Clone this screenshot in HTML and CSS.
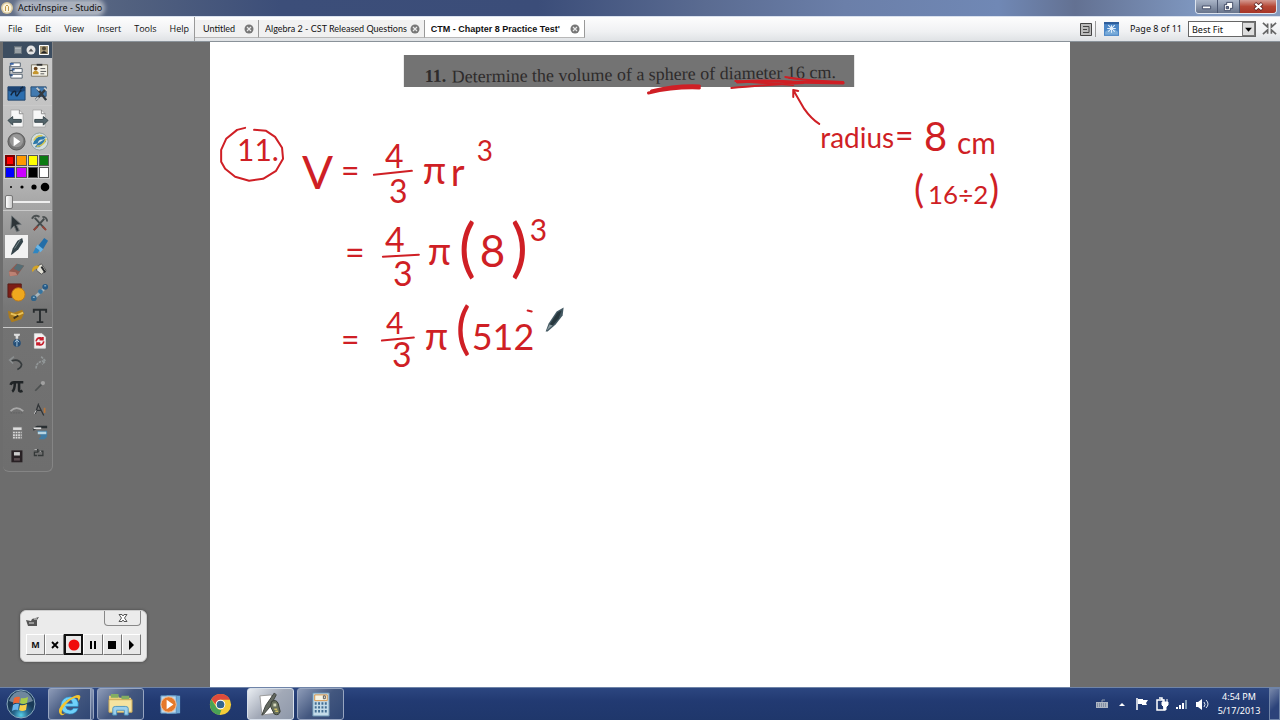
FILE: index.html
```html
<!DOCTYPE html>
<html lang="en">
<head>
<meta charset="utf-8">
<title>ActivInspire - Studio</title>
<link rel="stylesheet" href="styles.css">
</head>
<body>
<header class="titlebar">
  <svg class="app-icon" viewBox="0 0 12 12" aria-hidden="true"><circle cx="6" cy="6" r="6" fill="#d9c9a0"/><circle cx="6" cy="6" r="4.500" fill="#fbf4dc"/><path d="M4.500 9V4.500L6 3l1.500 1.500V9" fill="none" stroke="#c29a4c"/></svg>
  <h1 class="title">ActivInspire - Studio</h1>
  <div class="window-controls">
    <button class="win-btn" aria-label="Minimize"><svg viewBox="0 0 12 12"><path d="M1.500 5.500h9v3h-9z" fill="#fff" stroke="#3b4560"/></svg></button>
    <button class="win-btn" aria-label="Restore"><svg viewBox="0 0 12 12"><path d="M4 1.500h6.500V8H8v2.500H1.500V4H4z" fill="#fff" stroke="#3b4560"/><path d="M3.500 6h2.500v2.500H3.500z" fill="#65708c" stroke="#3b4560"/></svg></button>
    <button class="win-btn win-close" aria-label="Close"><svg viewBox="0 0 12 12"><path d="M2 2.500l8 7M10 2.500l-8 7" stroke="#5b2020" stroke-width="4"/><path d="M2.500 3l7 6M9.500 3l-7 6" stroke="#fff" stroke-width="2.400"/></svg></button>
  </div>
</header>

<div class="menubar">
  <nav class="menus">
    <button class="menu">File</button><button class="menu">Edit</button><button class="menu">View</button><button class="menu">Insert</button><button class="menu">Tools</button><button class="menu">Help</button>
  </nav>
  <div class="tabs">
    <div class="tab tab-short"><button class="tab-name">Untitled</button><button class="tab-close" aria-label="Close Untitled"><svg viewBox="0 0 10 10"><circle cx="5" cy="5" r="4.500" fill="#777"/><path d="M3 3l4 4M7 3L3 7" stroke="#e8e8e8" stroke-width="1.200"/></svg></button></div>
    <div class="tab"><button class="tab-name">Algebra 2 - CST Released Questions</button><button class="tab-close" aria-label="Close Algebra 2"><svg viewBox="0 0 10 10"><circle cx="5" cy="5" r="4.500" fill="#777"/><path d="M3 3l4 4M7 3L3 7" stroke="#e8e8e8" stroke-width="1.200"/></svg></button></div>
    <div class="tab tab-active"><button class="tab-name">CTM - Chapter 8 Practice Test'</button><button class="tab-close" aria-label="Close CTM"><svg viewBox="0 0 10 10"><circle cx="5" cy="5" r="4.500" fill="#777"/><path d="M3 3l4 4M7 3L3 7" stroke="#e8e8e8" stroke-width="1.200"/></svg></button></div>
  </div>
  <div class="page-tools">
    <button class="bar-btn" aria-label="Page notes"><svg viewBox="0 0 12 13"><path d="M.5.5h11v12H.5z" fill="#bbb" stroke="#444"/><path d="M3 3.500h6v6H3M3 6.500h4" fill="none" stroke="#444"/></svg></button>
    <span class="bar-rule"></span>
    <button class="bar-btn bar-wide" aria-label="Design mode"><svg viewBox="0 0 14 13"><path d="M0 0h14v13H0z" fill="#4b86c6"/><path d="M0 0h14v2H0z" fill="#2d5e9c"/><path d="M1 9l3-2 3 2 3-2 3 2v3H1z" fill="#78abd9"/><path d="M4 3l6 6M10 3L4 9M7 3v7M3 6h8" stroke="#e2effb"/></svg></button>
    <span class="page-count">Page 8 of 11</span>
    <label class="zoom"><select aria-label="Zoom"><option>Best Fit</option></select><span class="zoom-arrow"><svg viewBox="0 0 8 8"><path d="M1 2.500h6L4 6z" fill="#000"/></svg></span></label>
    <button class="bar-btn bar-wide" aria-label="Full screen"><svg viewBox="0 0 16 14"><path d="M1 1l5 4.500V1.500M1 13l5-4.500v4M15 1l-5 4.500V1.500M15 13l-5-4.500v4" fill="none" stroke="#666" stroke-width="1.800"/></svg></button>
  </div>
</div>

<main class="workspace">
  <section class="page" aria-label="Flipchart page">
    <svg class="canvas" viewBox="209 41 861 646">
      <path d="M403 54h451v32H403z" fill="#737373"/>
      <g class="question" transform="rotate(-0.7 424 81)"><text class="question-no" x="424" y="81">11.</text><text x="451" y="82">Determine the volume of a sphere of diameter 16 cm.</text></g>
      <g class="ink">
        <path class="thick" d="M648 92q26-6 51-5M651 90q24-6 48-5"/>
        <path class="thick" d="M737 81q28-2 55 0l51 1"/>
        <path d="M731 87q15-1 37-3l35-2M735 80l58 4M785 76q16 3 37 4l21 1"/>
        <path d="M819 123q-8-5-15-15l-11-19 0 7M793 89l5 1"/>
        <path d="M244 127l-8 2-11 9-5 11v12l4 7 10 8 14 4 14-2 13-8 7-12-1-11-7-11-9-6-12-1"/>
        <path d="M373 174l38-4M382 256l36-2M381 340l32-3M527 310l4 1"/>
      </g>
      <g class="writing">
        <text x="236" y="160" font-size="30">11.</text>
        <text x="301" y="188" font-size="46">V</text>
        <text x="340" y="181" font-size="32">=</text>
        <text x="384" y="167" font-size="32">4</text>
        <text x="388" y="202" font-size="32">3</text>
        <text x="422" y="183" font-size="38">π</text>
        <text x="450" y="185" font-size="38">r</text>
        <text x="476" y="160" font-size="28">3</text>
        <text x="344" y="264" font-size="34">=</text>
        <text x="384" y="251" font-size="34">4</text>
        <text x="392" y="285" font-size="34">3</text>
        <text x="427" y="264" font-size="38">π</text>
        <text x="458" y="269" font-size="64">(</text>
        <text x="479" y="266" font-size="44">8</text>
        <text x="510" y="269" font-size="64">)</text>
        <text x="529" y="240" font-size="30">3</text>
        <text x="340" y="350" font-size="32">=</text>
        <text x="385" y="333" font-size="30">4</text>
        <text x="391" y="367" font-size="34">3</text>
        <text x="424" y="349" font-size="38">π</text>
        <text x="455" y="347" font-size="56">(</text>
        <text x="471" y="349" font-size="36">512</text>
        <text x="820" y="147" font-size="28">radius</text>
        <text x="895" y="146" font-size="32">=</text>
        <text x="924" y="150" font-size="40">8</text>
        <text x="957" y="153" font-size="30">cm</text>
        <text x="914" y="202" font-size="38">(</text>
        <text x="928" y="203" font-size="26">16÷2</text>
        <text x="989" y="202" font-size="38">)</text>
      </g>
      <g><path d="M545 331l3-8 8-12 7-4-1 8-7 9-8 7z" fill="#435862"/><path d="M549 324l8-12 4-2-3 8-6 7z" fill="#27373d"/><path d="M546 330l3-6 3 1z" fill="#8a9a9f"/></g>
    </svg>
  </section>

  <aside class="toolbox" aria-label="Main toolbox">
    <div class="toolbox-head">
      <svg viewBox="0 0 10 10"><path d="M1 1h8v8H1z" fill="#66727b"/><path d="M2 3h6M3 3v5M5 3v5M7 3v5" stroke="#c8cccf"/></svg>
      <svg viewBox="0 0 10 10"><circle cx="5" cy="5" r="4.500" fill="#e5e5e5"/><path d="M2.500 6.500L5 3.500l2.500 3z" fill="#555"/></svg>
      <svg viewBox="0 0 10 10"><path d="M.5.5h9v9h-9z" fill="#a99b79" stroke="#fff"/><circle cx="5" cy="3.500" r="2" fill="#4e4635"/><path d="M1.500 8.500q3.500-5 7 0z" fill="#222"/></svg>
    </div>
    <div class="tools">
      <button aria-label="Main menu"><svg viewBox="0 0 20 20"><path d="M4 2h10v4H4zM6 8h10v4H6zM4 14h12v4H4z" fill="#fff" stroke="#53616f"/><path d="M3 2h4v2H3zM5 8h3v2H5zM3 14h3v2H3z" fill="#3a62a3"/><path d="M3 5v10h2M3 10h3" fill="none" stroke="#3b4b59"/></svg></button>
      <button aria-label="Profiles"><svg viewBox="0 0 20 20"><path d="M1.500 4h17v12h-17z" fill="#f4f2e8" stroke="#77715f"/><path d="M7 3h6v2H7z" fill="#333"/><circle cx="6" cy="8" r="2" fill="#6b4319"/><path d="M3 14v-2q3-4 6 0v2z" fill="#c5962e"/><path d="M11 8h5M11 11h6M11 13.500h4" stroke="#555"/></svg></button>
      <button aria-label="Annotate over desktop"><svg viewBox="0 0 20 20"><path d="M1 3h18v14H1z" fill="#2d6eae" stroke="#22456b"/><path d="M1 3h18v4q-9 4-18 0z" fill="#1c4474"/><path d="M4 12q3-6 5-4 0 6 2 4l4-6M14 5l3-2" fill="none" stroke="#13263d" stroke-width="1.500"/></svg></button>
      <button aria-label="Desktop tools"><svg viewBox="0 0 20 20"><path d="M1 3h16v10H1z" fill="#427ab0" stroke="#284d73"/><path d="M6 17L17 5M8 5l9 12" stroke="#323940" stroke-width="2.500"/><path d="M6 17l3-3M15 4l3 3M7 4l3 3" stroke="#c8cdd1" stroke-width="2"/></svg></button>
    </div>
    <div class="tools ruled">
      <button aria-label="Previous page"><svg viewBox="0 0 20 20"><path d="M4 1h9l4 4v14H4z" fill="#f7f7f7" stroke="#aaa"/><path d="M13 1v4h4" fill="none" stroke="#888"/><path d="M1 12l5-4v3h9v3H6v3z" fill="#53646b" stroke="#37464b"/></svg></button>
      <button aria-label="Next page"><svg viewBox="0 0 20 20"><path d="M3 1h9l4 4v14H3z" fill="#f7f7f7" stroke="#aaa"/><path d="M12 1v4h4" fill="none" stroke="#888"/><path d="M19 12l-5-4v3H5v3h9v3z" fill="#53646b" stroke="#37464b"/></svg></button>
      <button aria-label="Start activity"><svg viewBox="0 0 20 20"><circle cx="10" cy="10" r="9" fill="#777" stroke="#555"/><circle cx="10" cy="9" r="7" fill="#989898"/><path d="M7 5l7 5-7 5z" fill="#fff"/></svg></button>
      <button aria-label="Express poll"><svg viewBox="0 0 20 20"><circle cx="10" cy="10" r="9" fill="#d4dfdf" stroke="#8e9d9d"/><path d="M3 13q3-11 14-8l-3 3q-5-1-6 4z" fill="#2c78a8"/><path d="M5 16l3-4 8-5 1 3-7 6z" fill="#327bad"/><path d="M7 15q7 0 10-8M4 9q3-6 9-5" fill="none" stroke="#d9c951" stroke-width="1.500"/></svg></button>
    </div>
    <div class="palette">
      <button class="c-red" aria-label="Red"></button><button class="c-orange" aria-label="Orange"></button><button class="c-yellow" aria-label="Yellow"></button><button class="c-green" aria-label="Green"></button>
      <button class="c-blue" aria-label="Blue"></button><button class="c-violet" aria-label="Violet"></button><button class="c-black" aria-label="Black"></button><button class="c-white" aria-label="White"></button>
    </div>
    <div class="widths">
      <button aria-label="Width 1"><svg viewBox="0 0 10 10"><circle cx="5" cy="5" r="1"/></svg></button><button aria-label="Width 2"><svg viewBox="0 0 10 10"><circle cx="5" cy="5" r="1.600"/></svg></button><button aria-label="Width 3"><svg viewBox="0 0 10 10"><circle cx="5" cy="5" r="2.600"/></svg></button><button aria-label="Width 4"><svg viewBox="0 0 10 10"><circle cx="5" cy="5" r="4.300"/></svg></button>
    </div>
    <input class="pen-width" type="range" min="1" max="100" value="1" aria-label="Pen width">
    <div class="tools ruled">
      <button aria-label="Select"><svg viewBox="0 0 20 20"><path d="M5 2l10 9-5 .5 3 6-3 1-2.500-6L4 16z" fill="#2d3438" stroke="#6d7376"/></svg></button>
      <button aria-label="Tools"><svg viewBox="0 0 20 20"><path d="M4 17L15 5M5 4l11 12" stroke="#444b4c" stroke-width="2"/><path d="M2 5q3-5 8-2M13 3q5 0 5 5" fill="none" stroke="#4c5152" stroke-width="2"/><path d="M4 17l4-4M13 13l4 4" stroke="#93453a" stroke-width="2"/></svg></button>
      <button class="tool-on" aria-label="Pen" aria-pressed="true"><svg viewBox="0 0 20 20"><path d="M4 19l2-7 5-8 5-3 1 4-5 8-6 5z" fill="#35444a"/><path d="M8 12l6-9" stroke="#76878c"/></svg></button>
      <button aria-label="Highlighter"><svg viewBox="0 0 20 20"><path d="M8 10l7-9 4 3-6 10z" fill="#236ea8"/><path d="M6 11l2-3 6 5-3 3z" fill="#69b6e8"/><path d="M3 17l3-6 4 3-2 3z" fill="#2e86c2"/></svg></button>
      <button aria-label="Eraser"><svg viewBox="0 0 20 20"><path d="M2 12l8-8 8 2-7 10-8 1z" fill="#8f5a50"/><path d="M11 4l7 2-5 6-6-3z" fill="#566d74"/><path d="M2 12l7 1 2 3-8 1z" fill="#bd8274"/></svg></button>
      <button aria-label="Fill"><svg viewBox="0 0 20 20"><path d="M7 7l5-3 5 7-5 4-5-4z" fill="#e1dfd4" stroke="#555"/><path d="M2 11q1-6 8-5l-2 3q-4 1-5 4z" fill="#d3a326"/><path d="M12 7l4 6" stroke="#292b2d" stroke-width="2"/></svg></button>
      <button aria-label="Shape"><svg viewBox="0 0 20 20"><path d="M1 1h14v14H1z" fill="#7d1e16" stroke="#551c17"/><circle cx="12" cy="12" r="7" fill="#efa81e" stroke="#bd7a19"/></svg></button>
      <button aria-label="Connector"><svg viewBox="0 0 20 20"><path d="M5 15L15 6" stroke="#aab6bb" stroke-width="3"/><circle cx="4" cy="16" r="3" fill="#31648a"/><circle cx="11" cy="9" r="2.500" fill="#3674a0"/><circle cx="16" cy="4" r="3" fill="#265a86"/><path d="M15 3h2M3 15h2" stroke="#a9d5ed"/></svg></button>
      <button aria-label="Insert media"><svg viewBox="0 0 20 20"><path d="M1 5l6 2 9-3 2 4-3 6-10 3-3-5z" fill="#ac7c1e"/><path d="M4 8l6 2 7-3" fill="none" stroke="#e8c35c" stroke-width="2"/><path d="M7 13l5-3" stroke="#403318" stroke-width="2"/></svg></button>
      <button aria-label="Text"><svg viewBox="0 0 20 20"><path d="M4 4h13M10.500 4v13M7 17h7M4 3v4M17 3v4" stroke="#292d2f" stroke-width="2" fill="none"/></svg></button>
    </div>
    <div class="tools ruled tools-extra">
      <button aria-label="Reset"><svg viewBox="0 0 20 20"><path d="M7 2h7v2l-2 1v3H9V5L7 4z" fill="#ddd"/><circle cx="10.500" cy="13" r="4.500" fill="#244e77"/><path d="M10.500 9v8M8 12l2.500-3 2.500 3" stroke="#b9d4e8" fill="none"/></svg></button>
      <button aria-label="Reset page"><svg viewBox="0 0 20 20"><path d="M4 2h9l4 4v13H4z" fill="#f2f2f2" stroke="#ddd"/><path d="M6 11q1-5 6-4l2 2M15 11q-1 5-6 4l-2-2M14 6v3h-4M7 16v-3h4" fill="none" stroke="#c61f2d" stroke-width="2"/></svg></button>
      <button aria-label="Undo"><svg viewBox="0 0 20 20"><path d="M4 7q9-3 12 4 0 4-5 6" fill="none" stroke="#363b3d" stroke-width="2"/><path d="M7 2L2 6l4 4" fill="none" stroke="#8b8f90" stroke-width="2"/></svg></button>
      <button aria-label="Redo"><svg viewBox="0 0 20 20"><path d="M6 16q0-8 9-9M12 2l5 5-4 4" fill="none" stroke="#929798" stroke-width="2" stroke-dasharray="3 1"/></svg></button>
      <button aria-label="Maths tools"><svg viewBox="0 0 20 20"><path d="M3 8q1-3 4-3h11M8 6q0 8-3 10M13 6v8q0 3 4 1" fill="none" stroke="#202426" stroke-width="3"/></svg></button>
      <button aria-label="Dice"><svg viewBox="0 0 20 20"><path d="M5 15l8-8" stroke="#4c5050" stroke-width="2"/><circle cx="14" cy="6" r="2.500" fill="#a1a1a1"/></svg></button>
      <button aria-label="Protractor"><svg viewBox="0 0 20 20"><path d="M3 12q7-7 15 0" fill="none" stroke="#a8a8a8" stroke-width="2"/><path d="M3 14h15" stroke="#5d5f60" stroke-dasharray="2 1"/></svg></button>
      <button aria-label="Compass"><svg viewBox="0 0 20 20"><path d="M9 3L5 15M9 5l6 12M7 11h5" fill="none" stroke="#303437" stroke-width="1.500"/><path d="M4 15l2-4" stroke="#ddd"/><path d="M16 8v6" stroke="#b87539" stroke-width="2"/></svg></button>
      <button aria-label="Calculator"><svg viewBox="0 0 20 20"><path d="M5 3h12v15H5z" fill="#777"/><path d="M6 4h10v3H6z" fill="#ddd"/><path d="M6 10h10M6 13h10M6 16h10" stroke="#ddd" stroke-width="2" stroke-dasharray="2 1"/></svg></button>
      <button aria-label="Screen recorder"><svg viewBox="0 0 20 20"><path d="M2 5l5-3h12v3H8l-5 3z" fill="#292f32"/><path d="M3 5h9" stroke="#ddd" stroke-width="2"/><path d="M7 8h12v7l-3 3H9l3-4z" fill="#427ca3"/><path d="M8 9h10v3H8z" fill="#b6d4e2"/></svg></button>
      <button aria-label="Clipboard"><svg viewBox="0 0 20 20"><path d="M4 4h13v14H4z" fill="#282124"/><path d="M7 6h7v4H7z" fill="#ccc"/><path d="M7 13h7v3H7z" fill="#594c50"/></svg></button>
      <button aria-label="Camera"><svg viewBox="0 0 20 20"><path d="M4 3h4v3H4v4h3M9 5h5v5H8" fill="none" stroke="#343838" stroke-width="1.500"/><path d="M4 3h3M10 5h2" stroke="#ccc"/></svg></button>
    </div>
  </aside>

  <aside class="recorder" aria-label="Screen recorder">
    <div class="recorder-head">
      <svg class="cam" viewBox="0 0 14 10"><path d="M0 3l5 1 1-2 7-2-2 3v6H2z" fill="#555"/><path d="M3 6h5M8 2h3" stroke="#ddd"/></svg>
      <button class="recorder-close" aria-label="Close recorder"><svg viewBox="0 0 10 8"><path d="M1 .5h3l1 1.500L6 .5h3L6.500 4 9 7.500H6L5 6 4 7.500H1L3.500 4z" fill="#fff" stroke="#555"/></svg></button>
    </div>
    <div class="recorder-keys">
      <button>M</button>
      <button aria-label="Cancel"><svg viewBox="0 0 12 12"><path d="M3 3l6 6M9 3L3 9" stroke="#000" stroke-width="1.800"/></svg></button>
      <button class="rec-on" aria-label="Record"><svg viewBox="0 0 12 12"><circle cx="6" cy="6" r="5.500" fill="#f00d0d"/></svg></button>
      <button aria-label="Pause"><svg viewBox="0 0 12 12"><path d="M4 2v8M8 2v8" stroke="#000" stroke-width="2"/></svg></button>
      <button aria-label="Stop"><svg viewBox="0 0 12 12"><path d="M2 2h8v8H2z"/></svg></button>
      <button aria-label="Play"><svg viewBox="0 0 12 12"><path d="M4 1l5 5-5 5z"/></svg></button>
    </div>
  </aside>
</main>

<footer class="taskbar">
  <button class="start" aria-label="Start"><svg viewBox="0 0 30 30"><defs><radialGradient id="orb" cy=".9"><stop offset="0" stop-color="#57d0e8"/><stop offset=".5" stop-color="#28698f"/><stop offset="1" stop-color="#193957"/></radialGradient></defs><circle cx="15" cy="15" r="14" fill="url(#orb)" stroke="#8aa9bd"/><path d="M3 12Q7 2 15 2t12 10q-12 5-24 0z" fill="#a9bdcc" opacity=".6"/><path d="M8 9q3-2 6-1l-1 6q-3-1-6 1z" fill="#ed6534"/><path d="M15 9q3 1 7-1l-1 6q-4 2-7 0z" fill="#a8cc4b"/><path d="M7 16q3-2 6-1l-1 6q-3-1-6 1z" fill="#6ab5ec"/><path d="M14 16q3 1 7-1l-1 6q-4 2-7 0z" fill="#f8ce48"/></svg></button>
  <nav class="tasks">
    <button class="task task-open task-stack" aria-label="Internet Explorer"><svg viewBox="0 0 26 26"><path d="M20 15H9q1 4 5 4 2 0 3-2h5q-2 6-9 6-9-1-9-9 1-9 10-9 9 1 8 10zM9 12h7q0-4-3.500-4T9 12z" fill="#6fd1fa" stroke="#2587c0" stroke-width=".6"/><path d="M3 23Q-1 17 11 8 22 1 24 4q1 2-2 6 1-4-2-4-4 0-9 5-7 7-6 11 1 2 5-1-5 5-7 2z" fill="#f3c52f"/></svg></button>
    <button class="task task-open" aria-label="Windows Explorer"><svg viewBox="0 0 26 26"><path d="M1 4h9l2 2h12v15H1z" fill="#e9cd79"/><path d="M3 2h8v4H3zM14 4h8v4h-8z" fill="#82ad62"/><path d="M1 8h24v13H1z" fill="#f6e3a0" stroke="#c9a856"/><path d="M5 24v-7q0-2 3-2h10q3 0 3 2v7h-4v-5H9v5z" fill="#9cd0ed" stroke="#4e95bd"/></svg></button>
    <button class="task" aria-label="Media Player"><svg viewBox="0 0 26 26"><path d="M9 3l14 1v18l-14 1z" fill="#6ea8d5"/><path d="M3 4h16v18H3z" fill="#b9d7ed" stroke="#5b91bd"/><circle cx="11" cy="13" r="8" fill="#e5792b" stroke="#f2c6a0"/><path d="M9 8l7 5-7 5z" fill="#fff"/></svg></button>
    <button class="task" aria-label="Chrome"><svg viewBox="0 0 26 26"><circle cx="13" cy="13" r="11" fill="#f3cc38"/><path d="M3.500 7.500Q7 2 13 2q7 0 10 6H13q-4 0-5 5z" fill="#df4b3c"/><path d="M3.500 7.500l5.500 9q2 3 5 2l-2 5.500Q2 22 2 13q0-3 1.500-5.500z" fill="#49a356"/><circle cx="13" cy="13" r="5" fill="#fff"/><circle cx="13" cy="13" r="4" fill="#32658e"/></svg></button>
    <button class="task task-open task-front" aria-label="ActivInspire"><svg viewBox="0 0 26 26"><path d="M2 4l12-1 5 19-15 2z" fill="#fff" stroke="#999"/><path d="M4 24l4-10L17 1l2 2-7 13-6 7z" fill="#646960" stroke="#3d423d"/><path d="M14 10q5-3 7 2l2 8q-1 5-6 3l-4-8z" fill="#676f5b" stroke="#353a33"/><path d="M16 12h3v3h-3z" fill="#d5d8be"/><path d="M17 18h3M18 20h3" stroke="#cdbf67" stroke-width="1.500"/></svg></button>
    <button class="task task-open" aria-label="Calculator"><svg viewBox="0 0 26 26"><path d="M5 1h17v24H5z" fill="#c4dce9" stroke="#638aaa"/><path d="M7 3h13v6H7z" fill="#f6f4e4" stroke="#d99345"/><path d="M16 4h2v3h-2z" fill="none" stroke="#555"/><path d="M7 12h13M7 16h13M7 20h13" stroke="#436e92" stroke-width="2.500" stroke-dasharray="2 1.500"/></svg></button>
  </nav>
  <div class="tray">
    <svg viewBox="0 0 14 14"><path d="M1 5h12v6H1z" fill="#aeb6c3"/><path d="M2 7h10M2 9h10" stroke="#566783" stroke-dasharray="1 1"/><path d="M7 5V3h3" fill="none" stroke="#8f9aac"/></svg>
    <svg viewBox="0 0 14 14"><path d="M4 9l3-3 3 3z" fill="#fff"/></svg>
    <svg viewBox="0 0 14 14"><path d="M2 1v12" stroke="#fff" stroke-width="1.500"/><path d="M3 2h5v1h5l-2 3 1 2H7V7H3z" fill="#fff"/></svg>
    <svg viewBox="0 0 14 14"><path d="M2 3h7v10H2zM4 1h3v2" fill="none" stroke="#fff" stroke-width="1.500"/><path d="M7 5h6v3l-2 2v3H9v-3L7 8zM8 2v3M12 2v3" fill="#fff" stroke="#fff"/></svg>
    <svg viewBox="0 0 14 14"><path d="M1 10h2v2H1zM4 8h2v4H4zM7 6h2v6H7z" fill="#fff"/><path d="M10 3h2v9h-2z" fill="#7f9ab3"/></svg>
    <svg viewBox="0 0 14 14"><path d="M1 5h2l4-3v11l-4-3H1z" fill="#fff"/><path d="M9 5q2 2.500 0 5M11 3q4 4 0 8" fill="none" stroke="#dde5ee"/></svg>
  </div>
  <div class="clock"><time>4:54 PM</time><time>5/17/2013</time></div>
  <button class="show-desktop" aria-label="Show desktop"></button>
</footer>
</body>
</html>
```

FILE: styles.css
```css
* { box-sizing: border-box; }
body {
  margin: 0;
  height: 100vh;
  display: flex;
  flex-direction: column;
  overflow: hidden;
  background: #6d6d6d;
  font-family: "Noto Sans", "Open Sans", sans-serif;
  font-size: 9px;
  color: #111;
}
button { margin: 0; padding: 0; border: 0; background: none; color: inherit; font: inherit; }
svg { display: block; }

.titlebar {
  flex: 0 0 16px;
  display: flex;
  align-items: center;
  gap: 5px;
  padding-left: 1px;
  background: linear-gradient(90deg, #66728a 0, #52617f 10%, #3c4e79 22%, #3b4d79 42%, #5a6b91 55%, #6b7fa9 66%, #7088b5 78%, #637192 84%, #8099c2 94%, #8499bb 100%);
}
.app-icon { flex: 0 0 12px; width: 12px; height: 12px; position: relative; z-index: 1; }
.title {
  margin: 0;
  border-radius: 8px;
  background: #a9b0bd;
  box-shadow: 0 0 4px 3px #a9b0bd;
  font-size: 9px;
  line-height: 12px;
  font-weight: 400;
}
.window-controls {
  margin-left: auto;
  align-self: stretch;
  display: flex;
  height: 14px;
  margin-right: 3px;
  border: 1px solid #dde4ee;
  border-top: 0;
  border-radius: 0 0 4px 4px;
  overflow: hidden;
}
.win-btn { width: 22px; display: grid; place-items: center; background: linear-gradient(#aab5c8, #68748b); border-right: 1px solid #4b5670; }
.win-btn svg { width: 11px; height: 11px; }
.win-close { width: 36px; background: linear-gradient(#d49a91, #b54735 50%, #a73527); border: 0; }

.menubar {
  flex: 0 0 26px;
  display: flex;
  align-items: stretch;
  background: linear-gradient(#fdfdfd, #f0f1f3 60%, #dfe2e5);
  border-top: 1px solid #d9e1ee;
  border-bottom: 1px solid #8a9299;
}
.menus { display: flex; gap: 12px; flex: 0 0 195px; padding-left: 8px; align-items: center; border-right: 1px solid #999; }
.menu { font-family: "Open Sans", "Noto Sans", sans-serif; font-size: 9px; line-height: 20px; white-space: nowrap; }
.menus { gap: 13px; }
.tabs { display: flex; padding: 3px 0; font-family: Lato, "Liberation Sans", sans-serif; }
.tab { flex: 0 0 160px; display: flex; align-items: center; gap: 3px; padding: 0 4px 0 6px; border-right: 1px solid #999; border-bottom: 1px solid #b8b8b8; background: #f1f1f1; }
.tab-short { flex-basis: 64px; padding-left: 8px; }
.tab-active { background: #fff; font-family: "Liberation Sans", sans-serif; font-weight: 700; }
.tab-name { flex: 1; min-width: 0; overflow: hidden; white-space: nowrap; text-align: left; }
.tab-close { flex: 0 0 10px; }
.tab-close svg { width: 10px; height: 10px; }
.page-tools { margin-left: auto; display: flex; align-items: center; gap: 6px; padding-right: 3px; }
.bar-btn { width: 12px; }
.bar-wide { width: 15px; }
.bar-btn svg { width: 100%; }
.bar-rule { width: 1px; height: 16px; background: #999; margin: 0 2px 0 -3px; }
.page-count { margin-left: 5px; line-height: 16px; white-space: nowrap; }
.zoom { position: relative; width: 68px; height: 16px; }
.zoom select { width: 100%; height: 100%; padding: 0 16px 0 3px; border: 1px solid #666; border-radius: 0; appearance: none; background: #fff; color: #111; font: inherit; }
.zoom-arrow { position: absolute; right: 1px; top: 1px; width: 13px; height: 14px; display: grid; place-items: center; background: #ddd; border: 1px solid #777; pointer-events: none; }
.zoom-arrow svg { width: 9px; }

.workspace { position: relative; flex: 1; min-height: 0; display: flex; justify-content: center; background: #6d6d6d; }
.page { height: 100%; aspect-ratio: 4 / 3; background: #fff; }
.canvas { width: 100%; height: 100%; }
.question { font-family: "Liberation Serif", serif; font-size: 18px; fill: #2e2b2b; }
.question-no { font-weight: 700; }
.ink { fill: none; stroke: #cf1f25; stroke-width: 2; stroke-linecap: round; stroke-linejoin: round; }
.ink .thick { stroke-width: 3; }
.writing { fill: #cf1f25; font-family: Lato, "Open Sans", sans-serif; font-weight: 400; }

.toolbox { position: absolute; left: 3px; top: 0; width: 50px; padding-bottom: 4px; border-right: 1px solid #858585; border-bottom: 1px solid #858585; border-radius: 0 0 6px 6px; background: linear-gradient(#cdcdcd 0, #b9b9b9 30%, #8a8a8a 50%, #737373 64%, #6e6e6e 100%); }
.toolbox-head { height: 16px; display: flex; align-items: center; justify-content: flex-end; gap: 3px; padding-right: 3px; background: #3c4d60; }
.toolbox-head svg { width: 10px; height: 10px; }
.tools { display: grid; grid-template-columns: 23px 23px; grid-auto-rows: 23px; padding: 1px 2px 0; }
.tools button { display: grid; place-items: center; }
.tools svg { width: 19px; height: 19px; }
.ruled { border-top: 1px solid #c9c9c9; }
.tools .tool-on { background: #f2f2f2; }
.tools-extra svg { width: 17px; height: 17px; }
.palette { display: grid; grid-template-columns: repeat(4, 1fr); grid-auto-rows: 11px; gap: 1px; margin: 1px 2px 0 1px; padding: 1px; background: #cfcfcf; }
.palette button { border: 1px solid #555; }
.palette .c-red { background: #f00; border: 2px solid #700; }
.c-orange { background: #f90; }
.c-yellow { background: #ff0; }
.c-green { background: #0b7a12; }
.c-blue { background: #00f; }
.c-violet { background: #c0f; }
.c-black { background: #000; }
.c-white { background: #fff; }
.widths { display: grid; grid-template-columns: repeat(4, 11px); justify-content: space-between; padding: 2px 1px 2px 3px; }
.widths svg { width: 10px; height: 12px; }
.pen-width { display: block; width: 45px; height: 14px; margin: 0 2px 1px; appearance: none; background: linear-gradient(#eee, #eee) center / 100% 2px no-repeat; }
.pen-width::-webkit-slider-thumb { appearance: none; width: 8px; height: 14px; border: 1px solid #777; border-radius: 2px; background: linear-gradient(90deg, #fff, #ccc); }

.recorder { position: absolute; left: 20px; bottom: 25px; width: 127px; padding: 0 5px 6px; border: 1px solid #ccc; border-radius: 6px; background: #ebebeb; box-shadow: 0 0 3px #444; }
.recorder-head { display: flex; justify-content: space-between; height: 23px; }
.cam { width: 14px; height: 10px; margin-top: 6px; }
.recorder-close { width: 37px; height: 15px; display: grid; place-items: center; border: 1px solid #888; border-top: 0; border-radius: 0 0 4px 4px; }
.recorder-close svg { width: 10px; height: 8px; }
.recorder-keys { display: grid; grid-template-columns: repeat(6, 1fr); height: 21px; }
.recorder-keys button { display: grid; place-items: center; border: 1px solid #fff; border-right-color: #777; border-bottom-color: #777; background: #e8e8e8; font-weight: 700; }
.recorder-keys svg { width: 12px; height: 12px; }
.recorder-keys .rec-on { border: 2px solid #111; }

.taskbar { flex: 0 0 33px; display: flex; align-items: stretch; border-top: 1px solid #6f84a8; background: linear-gradient(#2c4680, #223a72 40%, #1f376b); color: #fff; }
.start { width: 42px; padding-left: 6px; }
.start svg { width: 30px; height: 30px; }
.tasks { display: flex; gap: 3px; padding-left: 6px; }
.task { width: 47px; display: grid; place-items: center; border: 1px solid transparent; border-radius: 3px; }
.task svg { width: 25px; height: 25px; }
.task-open { border-color: #97a5c0; background: linear-gradient(135deg, #8d9bb7, #43577f 50%, #304774); }
.task-stack { width: 46px; border-right: 4px double #97a5c0; }
.task-front { background: linear-gradient(135deg, #e9edf2, #a2a9b7 50%, #8e98aa); border-color: #d7dfea; }
.tray { margin-left: auto; display: flex; align-items: center; gap: 6px; }
.tray svg { width: 14px; height: 14px; }
.clock { width: 60px; display: flex; flex-direction: column; justify-content: center; text-align: center; line-height: 14px; }
.show-desktop { width: 11px; border: 1px solid #6f84a8; background: linear-gradient(135deg, #7888aa, #2c437a 60%); }
```
